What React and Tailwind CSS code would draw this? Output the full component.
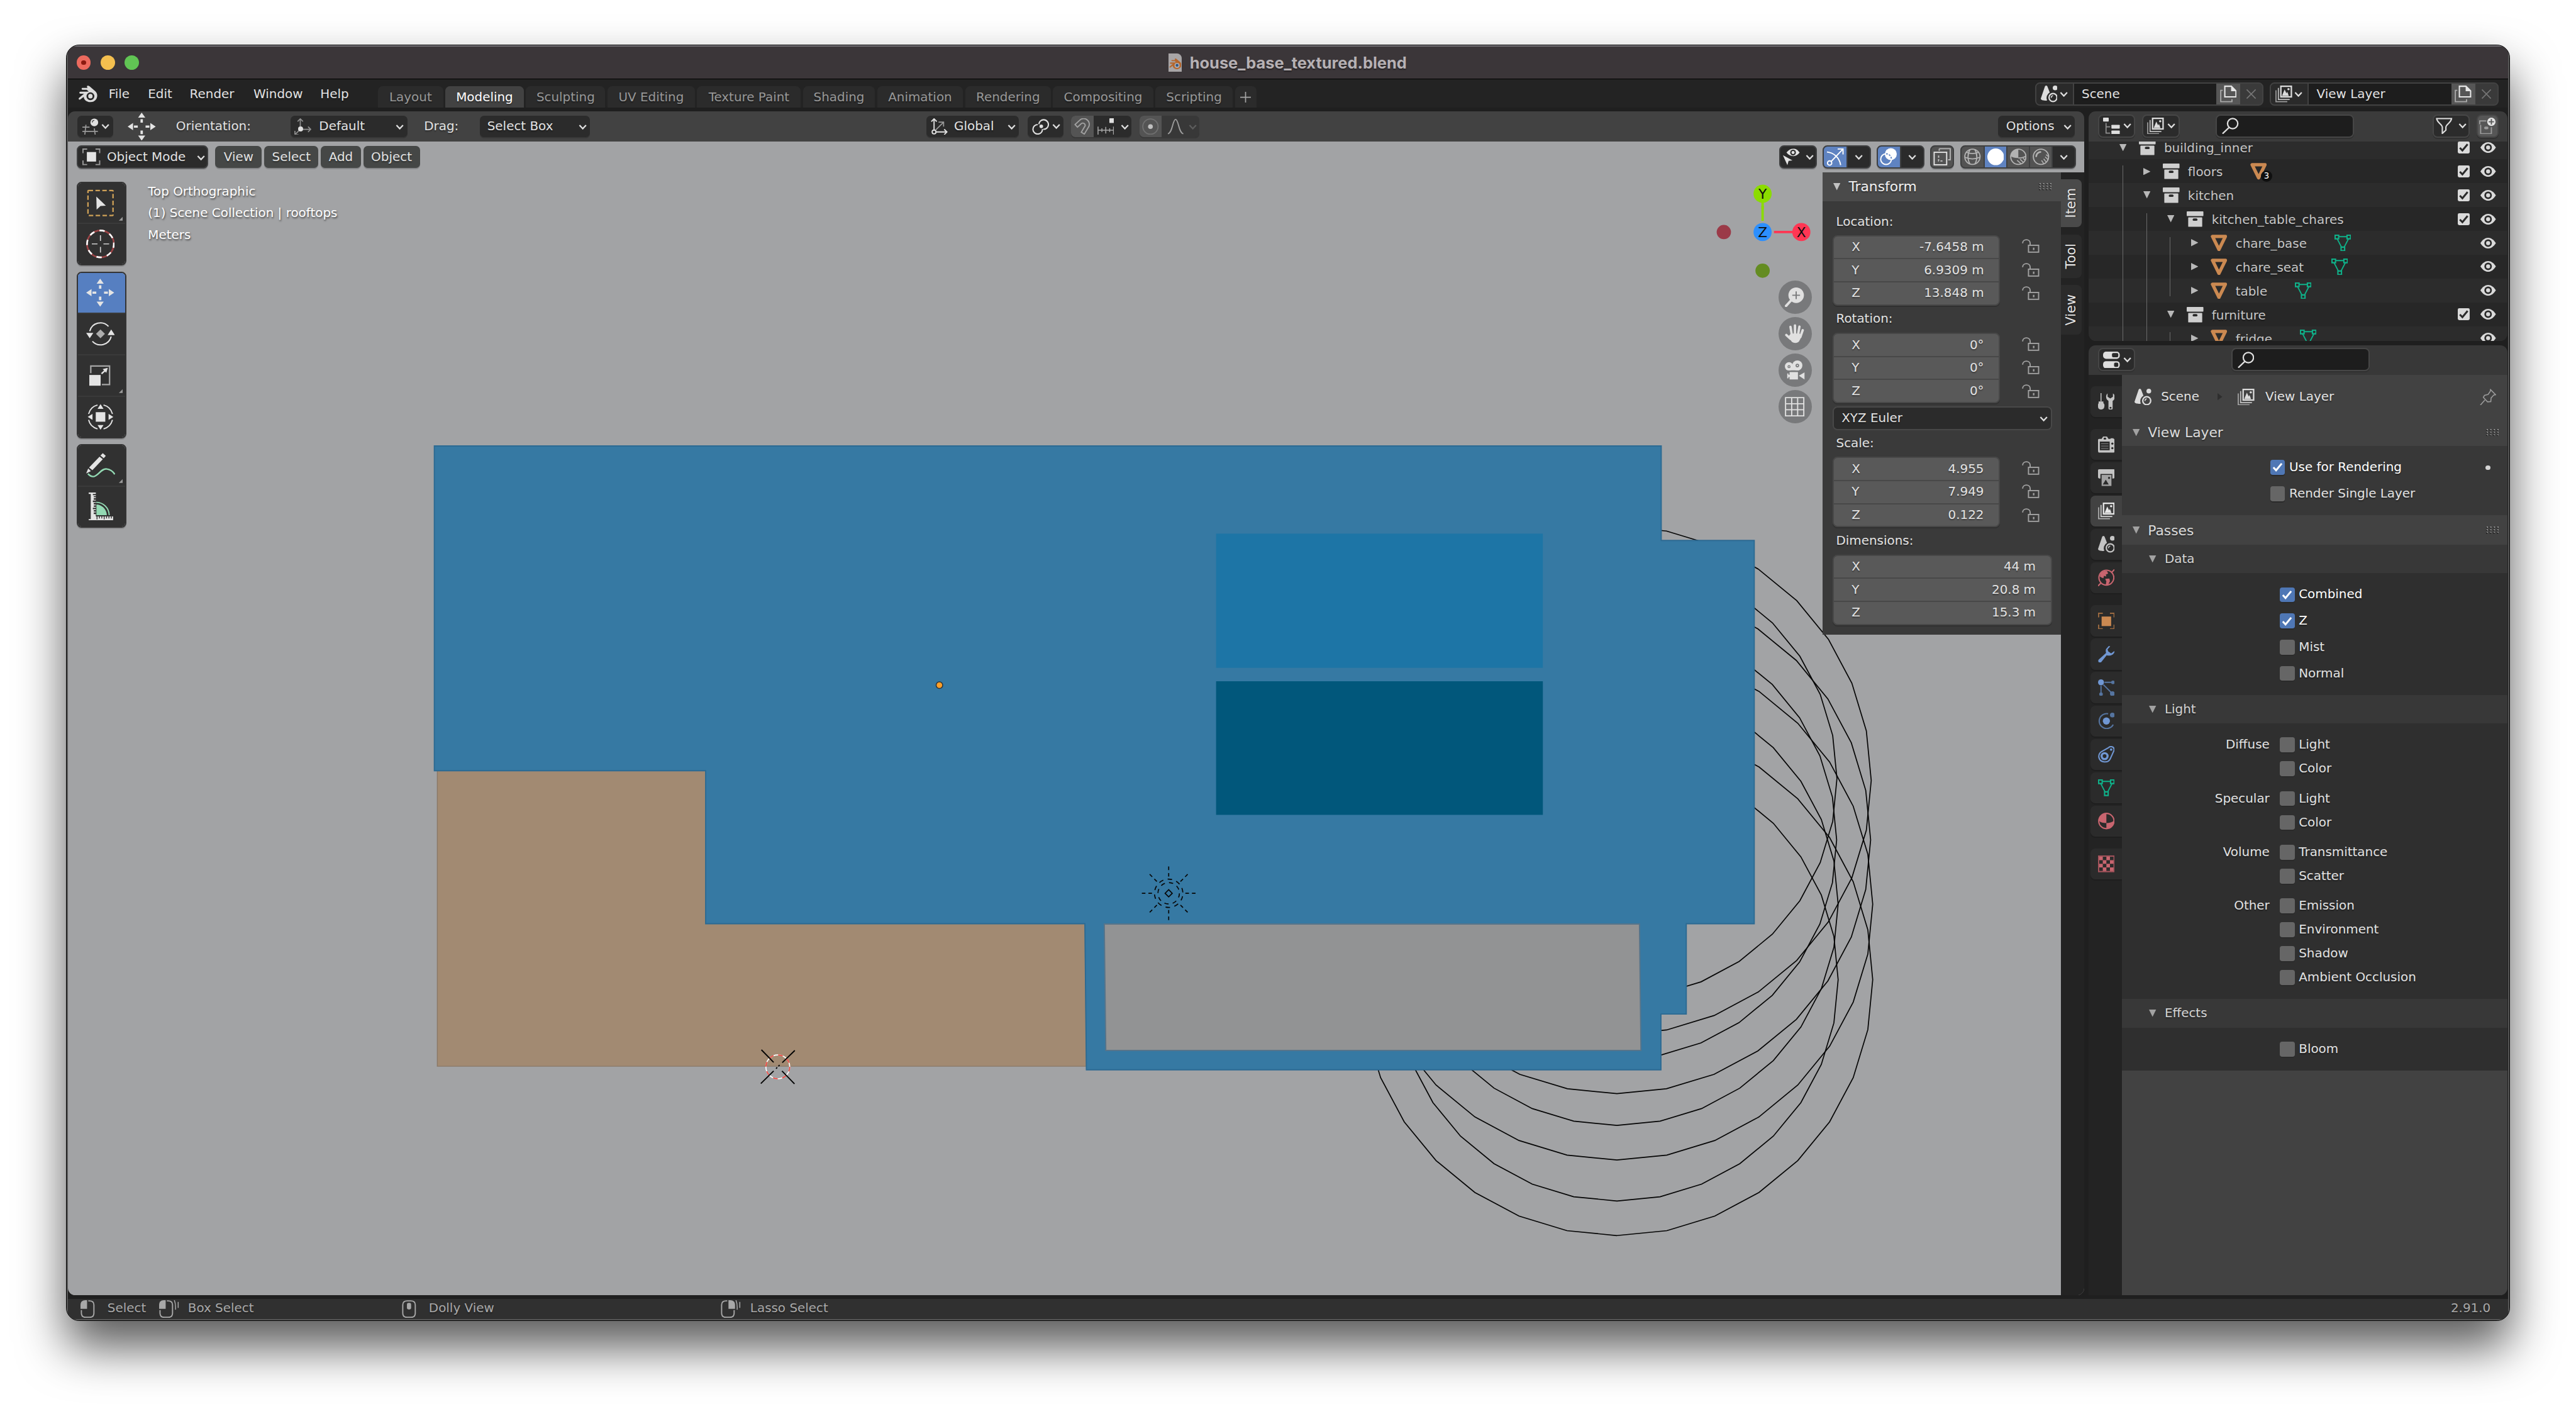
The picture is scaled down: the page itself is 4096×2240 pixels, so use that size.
import React from "react";

/* ---------- small drawing helpers ---------- */

const Svg = ({ w = 28, h = 28, className = "", children }) => (
  <svg width={w} height={h} viewBox={`0 0 ${w} ${h}`} className={`block shrink-0 ${className}`} fill="none">
    {children}
  </svg>
);

const Chevron = ({ c = "#dedede" }) => (
  <Svg w={14} h={10}>
    <path d="M1.500 2L7 8L12.500 2" stroke={c} strokeWidth="2.400" />
  </Svg>
);

const SceneIcon = ({ c = "#dcdcdc" }) => (
  <Svg>
    <path d="M9 0C10 0 10.800.8 11.200 1.800L15 11.500A10.500 10.500 0 0 0 10.500 25C6 26 0 24.800 0 22L6.800 1.800C7.200.8 8 0 9 0Z" fill={c} />
    <circle cx="24" cy="4" r="4" fill={c} />
    <circle cx="20.500" cy="20" r="6.700" stroke={c} strokeWidth="2.400" />
    <path d="M17.500 20.500A3.500 3.500 0 0 1 20.500 17" stroke={c} strokeWidth="1.600" />
  </Svg>
);

const ViewLayerIcon = ({ c = "#dcdcdc" }) => (
  <Svg>
    <path d="M1 8V27H20" stroke={c} strokeWidth="1.800" opacity=".65" />
    <path d="M5 4V23.300H24" stroke={c} strokeWidth="1.800" opacity=".85" />
    <rect x="9.200" y="1.200" width="17.600" height="17.800" stroke={c} strokeWidth="2.400" />
    <path d="M11 17.500L15.500 6.500L18.500 13L20 10.500L22.500 17.500Z" fill={c} />
    <circle cx="22" cy="6" r="1.900" fill={c} />
  </Svg>
);

const MeshDataIcon = () => (
  <Svg>
    <g stroke="#0fb189" strokeWidth="2">
      <path d="M7 3.500H21M4.500 7L12 21.500M23.500 7L16 21.500" />
      <path d="M1 1H7V7H1ZM21 1H27V7H21ZM11 21H17V27H11Z" strokeWidth="2.200" />
    </g>
  </Svg>
);

const MeshObjIcon = () => (
  <Svg>
    <path d="M3.200 3H24.800L14 25Z" stroke="#cb8951" strokeWidth="5.600" strokeLinejoin="round" />
  </Svg>
);

const CollectionIcon = () => (
  <Svg>
    <rect x="0" y="1" width="28" height="8" rx="1" fill="#cfcfcf" />
    <rect x="2.500" y="11" width="23.500" height="16" rx="1" fill="#cfcfcf" />
    <rect x="10" y="13" width="8" height="4" rx="2" fill="#2a2a2a" />
  </Svg>
);

const EyeIcon = () => (
  <Svg w={28} h={20}>
    <path d="M1 10C5 4 9 1 14 1S23 4 27 10C23 16 19 19 14 19S5 16 1 10Z" fill="#dadada" />
    <circle cx="14" cy="10" r="6.300" fill="#2a2a2a" />
    <circle cx="14" cy="10" r="3.400" fill="#dadada" />
  </Svg>
);

const CheckLight = () => (
  <Svg w={20} h={20}>
    <rect width="20" height="20" rx="2.500" fill="#dadada" />
    <path d="M3.500 10.500L7.800 15L16.500 4.500" stroke="#2a2a2a" strokeWidth="3.200" />
  </Svg>
);

const SearchIcon = () => (
  <Svg>
    <circle cx="18" cy="10" r="8.600" stroke="#dedede" strokeWidth="2.400" />
    <path d="M12 16.500L1 27" stroke="#dedede" strokeWidth="2.400" />
  </Svg>
);

const CopyIcon = () => (
  <Svg>
    <path d="M1.200 8H4.500M1.200 7V27H20V23" stroke="#a9a9a9" strokeWidth="2" />
    <path d="M8 1.200H19L26.800 9V19H8Z" stroke="#e6e6e6" strokeWidth="2.200" />
    <path d="M18.500 1V9.500H27Z" fill="#e6e6e6" />
  </Svg>
);

const CrossIcon = () => (
  <Svg w={18} h={18}>
    <path d="M1.500 1.500L16.500 16.500M16.500 1.500L1.500 16.500" stroke="#757575" strokeWidth="1.800" />
  </Svg>
);

const LockIcon = () => (
  <Svg w={29} h={24}>
    <path d="M1.200 7C1.200 3.500 4 1.200 7.500 1.200S13.800 3.500 13.800 7V10.500" stroke="#a2a2a2" strokeWidth="2" />
    <rect x="11" y="10.500" width="17" height="11.500" stroke="#a2a2a2" strokeWidth="2" />
    <rect x="18.500" y="14.500" width="2.400" height="4" fill="#a2a2a2" />
  </Svg>
);

const Grip = () => (
  <Svg w={22} h={12}>
    {[0, 6, 12, 18].map((x) => (
      <g key={x}>
        <path d={`M${x + 1} 1V3M${x + 1} 5.500V7.500M${x + 1} 10V12`} stroke="#151515" strokeWidth="2" />
        <path d={`M${x + 2} 0V2M${x + 2} 4.500V6.500M${x + 2} 9V10.500`} stroke="#969696" strokeWidth="2" />
      </g>
    ))}
  </Svg>
);

const TriDown = ({ c = "#b0b0b0" }) => (
  <Svg w={12} h={12}>
    <path d="M0 0H12L6 12Z" fill={c} />
  </Svg>
);
const TriRight = () => (
  <Svg w={12} h={12}>
    <path d="M0 0V12L12 6Z" fill="#b8b8b8" />
  </Svg>
);

const MoveIcon = () => (
  <Svg w={47} h={47}>
    <g fill="#e4e4e4">
      <path d="M23.500 0L29.500 8.500H17.500ZM23.500 47L17.500 38.500H29.500ZM0 23.500L9 17.500V29.500ZM47 23.500L38 17.500V29.500Z" />
      <path d="M21.500 11H25.500V17H21.500ZM21.500 30H25.500V36H21.500ZM10.500 21.700H17V25.300H10.500ZM30 21.700H36.500V25.300H30Z" />
    </g>
  </Svg>
);

const BlenderLogo = ({ w = 31, h = 28, c = "#dcdcdc", dot = "#dcdcdc", hole = "#232323" }) => (
  <svg width={w} height={h} viewBox="0 0 31 28" className="block shrink-0">
    <path
      d="M14.500.6C15.800-.4 17.500.6 18.500 1.400L28.500 10C34 15.500 31 27.500 20 27.800C13 28 8.800 23.300 8.500 19L3 23.200C1.200 24.500-1 22.700.6 20.800L9 13.800H3C.8 13.800.6 10.300 3 10.200H14L17 10L13.600 7H6.500C4.600 7 4.600 4 6.500 4H15C14 3 13.600 1.600 14.500.6Z"
      fill={c}
    />
    <circle cx="19.800" cy="18" r="6.600" fill={hole} />
    <circle cx="19.800" cy="17.800" r="3.700" fill={dot} />
  </svg>
);

/* ---------- generic widgets ---------- */

const Chip = ({ className = "", children }) => (
  <div className={`flex h-[36px] shrink-0 items-center rounded-[7px] bg-[#2b2b2b] shadow-[0_2px_0_#383838] ${className}`}>{children}</div>
);

const Field = ({ rows, wide }) => (
  <div className={`flex h-[118px] shrink-0 flex-col overflow-hidden rounded-[8px] border-[2.2px] border-[#484848] bg-[#595959] shadow-[0_2px_0_#303030] ${wide ? "w-[368px]" : "w-[281px]"}`}>
    {rows.map(([k, v], i) => (
      <div key={k} className={`flex flex-1 items-center justify-between pl-[30px] pr-[25px] ${i ? "border-t-[2.2px] border-[#484848]" : ""}`}>
        <span>{k}</span>
        <span>{v}</span>
      </div>
    ))}
  </div>
);

const LockedField = ({ rows }) => (
  <div className="flex h-[118px]">
    <Field rows={rows} />
    <div className="ml-[37px] flex flex-col pt-[7px]">
      {rows.map(([k]) => (
        <div key={k} className="h-[39.500px] shrink-0">
          <LockIcon />
        </div>
      ))}
    </div>
  </div>
);

const Check = ({ on }) =>
  on ? (
    <div className="flex size-[25px] shrink-0 items-center justify-center rounded-[4px] bg-[#4f77b5] shadow-[0_2px_0_#2a2a2a]">
      <Svg w={20} h={18}>
        <path d="M3 9.500L7.500 14.500L17 3" stroke="#fff" strokeWidth="3.200" />
      </Svg>
    </div>
  ) : (
    <div className="size-[25px] shrink-0 rounded-[4px] bg-[#666] shadow-[0_2px_0_#2a2a2a]" />
  );

/* ---------- top bars ---------- */

const TitleBar = () => (
  <div className="flex h-[54px] shrink-0 items-center bg-[#3b3639]">
    <div className="flex w-[1845px] gap-[16.500px] pl-[14px]">
      <div className="flex size-[24px] items-center justify-center rounded-full bg-[#ec6a5e]">
        <div className="size-[8px] rounded-full bg-[#8c1a10]" />
      </div>
      <div className="size-[24px] rounded-full bg-[#f4bf4f]" />
      <div className="size-[24px] rounded-full bg-[#61c554]" />
    </div>
    <div className="flex h-[30px] w-[23px] items-center justify-center rounded-tr-[8px] bg-[#a8a5a6] pt-[4px]">
      <BlenderLogo w={21} h={18} c="#b5652b" dot="#2c5687" hole="#b0adae" />
    </div>
    <div className="ml-[13px] whitespace-nowrap font-['Inter'] text-[26.800px] font-bold text-[#b6b1b4]">house_base_textured.blend</div>
  </div>
);

const tabs = [
  ["Layout", "w-[109px]"],
  ["Modeling", "w-[131px]"],
  ["Sculpting", "w-[133px]"],
  ["UV Editing", "w-[146px]"],
  ["Texture Paint", "w-[174px]"],
  ["Shading", "w-[120px]"],
  ["Animation", "w-[144px]"],
  ["Rendering", "w-[143px]"],
  ["Compositing", "w-[168px]"],
  ["Scripting", "w-[129px]"],
];

const IdBlock = ({ icon, name, nameW, className }) => (
  <div className={`flex h-[40px] overflow-hidden rounded-[8px] border-[2.2px] border-[#424242] bg-[#3a3a3a] ${className}`}>
    <div className="flex w-[61px] items-center gap-[4px] bg-[#2a2a2a] pl-[7px]">
      {icon}
      <Chevron />
    </div>
    <div className={`flex items-center border-l-[2.2px] border-[#424242] bg-[#1d1d1d] pl-[13px] ${nameW}`}>{name}</div>
    <div className="flex w-[40px] items-center justify-center bg-[#565656]">
      <CopyIcon />
    </div>
    <div className="flex flex-1 items-center justify-center">
      <CrossIcon />
    </div>
  </div>
);

const MenuBar = () => (
  <div className="flex h-[47px] shrink-0 items-center bg-[#232323] text-[#e2e2e2]">
    <div className="ml-[18px] pt-[2px]">
      <BlenderLogo />
    </div>
    <div className="ml-[19px] flex pt-[2px]">
      <span className="w-[66px]">File</span>
      <span className="w-[70px]">Edit</span>
      <span className="w-[107px]">Render</span>
      <span className="w-[112px]">Window</span>
      <span className="w-[97px]">Help</span>
    </div>
    <div className="flex gap-[4px] self-end">
      {tabs.map(([t, w]) => (
        <div
          key={t}
          className={`flex h-[36px] items-center justify-center rounded-t-[8px] pt-[3px] ${w} ${
            t === "Modeling" ? "bg-[#424242] text-white" : "bg-[#2b2b2b] text-[#989898]"
          }`}
        >
          {t}
        </div>
      ))}
      <div className="flex h-[36px] w-[36px] items-center justify-center rounded-t-[8px] bg-[#2b2b2b] pt-[2px]">
        <Svg w={18} h={18}>
          <path d="M9 0V18M0 9H18" stroke="#a5a5a5" strokeWidth="1.800" />
        </Svg>
      </div>
    </div>
    <div className="flex-1" />
    <IdBlock className="mt-[2px] w-[383px]" icon={<SceneIcon />} name="Scene" nameW="w-[241px]" />
    <IdBlock className="ml-[11px] mr-[16px] mt-[2px] w-[383px]" icon={<ViewLayerIcon />} name="View Layer" nameW="w-[241px]" />
  </div>
);

const ToolHeader = () => (
  <div className="flex h-[50px] shrink-0 items-center bg-[#424242] text-[#e2e2e2]">
    <Chip className="ml-[16px] w-[60px] gap-[4px] pl-[8px]">
      <Svg>
        <g stroke="#9a9a9a" strokeWidth="1.800">
          <path d="M6 11L4 28M20 17L21.500 28M0 15H12M0 22H26" />
        </g>
        <circle cx="20" cy="7" r="6.500" fill="#e0e0e0" />
        <path d="M16.500 7A3.500 3.500 0 0 1 20 3.500" stroke="#444" strokeWidth="1.400" />
      </Svg>
      <Chevron />
    </Chip>
    <div className="ml-[24px]">
      <MoveIcon />
    </div>
    <span className="ml-[34px] w-[192px]">Orientation:</span>
    <Chip className="w-[196px] pl-[7px]">
      <Svg>
        <g stroke="#8f8f8f" strokeWidth="1.800">
          <path d="M10 14V1M5.500 5.500L10 1L14.500 5.500M14 18.500H27.500M23 14L27.500 18.500L23 23M7.500 21L1 27.500M1 21V27.500H7" />
        </g>
        <circle cx="10.500" cy="18" r="4.200" fill="#e0e0e0" />
      </Svg>
      <span className="ml-[13px] flex-1">Default</span>
      <div className="mr-[6px] pt-[2px]">
        <Chevron />
      </div>
    </Chip>
    <span className="ml-[28px] w-[94px]">Drag:</span>
    <Chip className="w-[184px] pl-[12px]">
      <span className="flex-1">Select Box</span>
      <div className="mr-[5px] pt-[2px]">
        <Chevron />
      </div>
    </Chip>
    <Chip className="ml-[564px] w-[156px] pl-[8px]">
      <Svg>
        <g stroke="#e0e0e0" strokeWidth="2">
          <path d="M5.500 20V1M1 5.500L5.500 1L10 5.500M9 23H27M22.500 18.500L27 23L22.500 27.500" />
          <circle cx="5.500" cy="23" r="3.200" />
        </g>
        <path d="M8 20L21 7M13 6.500H21.500V14" stroke="#999" strokeWidth="1.800" />
      </Svg>
      <span className="ml-[11px] flex-1">Global</span>
      <div className="mr-[5px] pt-[2px]">
        <Chevron />
      </div>
    </Chip>
    <Chip className="ml-[14px] w-[60px] gap-[5px] pl-[8px]">
      <Svg>
        <g stroke="#e0e0e0" strokeWidth="2.200">
          <path d="M11.500 10A8 8 0 1 1 19 18.500" />
          <path d="M9.500 10.500A8 8 0 1 0 17.500 18" />
        </g>
        <circle cx="15.500" cy="13.500" r="3" fill="#e0e0e0" />
      </Svg>
      <Chevron />
    </Chip>
    <Chip className="ml-[13px] w-[101px] overflow-hidden">
      <div className="flex h-full w-[38px] items-center justify-center bg-[#545454]">
        <Svg>
          <path d="M1.500 10.500L9 3.500A9.500 9.500 0 0 1 24.500 14L17 26.500L12 23.500L18.500 12.500A4 4 0 0 0 12 9L5.500 15Z" stroke="#a0a0a0" strokeWidth="2" />
        </Svg>
      </div>
      <div className="ml-[6px]">
        <Svg>
          <path d="M1 14V28M27 14V28M1 20H27M7.500 17V23M14 14.500V25.500M20.500 17V23" stroke="#a8a8a8" strokeWidth="1.600" />
          <rect x="20" y="0" width="8" height="8" rx="1" fill="#e0e0e0" />
        </Svg>
      </div>
      <div className="ml-[11px] pt-[2px]">
        <Chevron />
      </div>
    </Chip>
    <Chip className="ml-[14px] w-[100px] overflow-hidden !bg-[#383838]">
      <div className="flex h-full w-[37px] items-center justify-center bg-[#545454]">
        <Svg>
          <circle cx="14" cy="14" r="12.800" stroke="#707070" strokeWidth="2" />
          <circle cx="14" cy="14" r="4" fill="#c0c0c0" />
        </Svg>
      </div>
      <div className="ml-[9px]">
        <Svg>
          <path d="M1 26C9 25 9 2 14 2S19 25 27 26" stroke="#9c9c9c" strokeWidth="2" />
        </Svg>
      </div>
      <div className="ml-[8px] pt-[2px]">
        <Chevron c="#5c5c5c" />
      </div>
    </Chip>
    <div className="flex-1" />
    <Chip className="mr-[16px] w-[128px] pl-[13px]">
      <span className="flex-1">Options</span>
      <div className="mr-[5px] pt-[2px]">
        <Chevron />
      </div>
    </Chip>
  </div>
);

/* ---------- 3D viewport ---------- */

const polygon = (cx, cy, r) =>
  Array.from({ length: 32 }, (_, i) => {
    const a = (i * Math.PI) / 16;
    return `${(cx + r * Math.sin(a)).toFixed(1)},${(cy + r * Math.cos(a)).toFixed(1)}`;
  }).join(" ");

const lights = [
  [1308.4, 426.5],
  [1408, 425.5],
  [1515.7, 429],
  [1642.4, 429],
  [1305, 369],
  [1408, 368.5],
  [1515.7, 371],
  [1642.4, 371],
];

const Canvas = () => (
  <svg className="absolute inset-0" width="3381" height="1935" viewBox="114 237 3381 1935" fill="none">
    {lights.map(([cy, r], i) => (
      <polygon key={i} points={polygon(2711.7, cy, r)} stroke="#050505" strokeWidth="1.800" />
    ))}
    <path d="M733.500 1291H1185V1548H1819.500L1822 1787.500H733.500Z" fill="#a28a72" stroke="#8a7867" strokeWidth="1.500" />
    <path
      d="M728.500 747.500H2786V906H2942V1548.500H2828V1700H2785.500V1793.500H1822L1819.500 1548.500H1183.500V1292H728.500Z"
      fill="#3679a3"
      stroke="#2c6a92"
      strokeWidth="2"
    />
    <path d="M1852 1549H2749.500L2752 1761H1854.500Z" fill="#929394" stroke="#57748a" strokeWidth="2" />
    <rect x="2039.500" y="894.500" width="548" height="225" fill="#1d75a6" />
    <rect x="2039.500" y="1142" width="548" height="224" fill="#01577b" />
    <circle cx="1575.500" cy="1148.500" r="5.500" fill="#ff9f28" stroke="#2f3436" strokeWidth="1.600" />
    <g stroke="#070707" strokeWidth="1.800" transform="translate(1960 1497.500)">
      <path d="M0-6L6 0L0 6L-6 0Z" />
      <circle r="18" strokeDasharray="7.100 7.037" />
      <circle r="23.800" strokeDasharray="7.500 7.454" transform="rotate(12)" />
      {[0, 45, 90, 135, 180, 225, 270, 315].map((a) => (
        <path key={a} d="M28 0H34M39 0H45" transform={`rotate(${a})`} />
      ))}
    </g>
    <g transform="translate(1304.500 1788.500)">
      <circle r="20" stroke="#fff" strokeWidth="1.800" />
      <circle r="20" stroke="#f0443e" strokeWidth="1.800" strokeDasharray="7.854 7.854" />
      <path d="M-27.500-28.500L-7-7.500M28.500-27.500L7.500-7M-28.500 28L-7 7M28 28.500L7 7M-3 3L-1 1M1-1L3-3" stroke="#000" strokeWidth="2" />
    </g>
    <g strokeWidth="4">
      <path d="M2956 345V370" stroke="#8bdc00" />
      <path d="M2975 388.800H3010" stroke="#ff3653" />
    </g>
    <circle cx="2956" cy="324.500" r="15.200" fill="#8bdc00" />
    <path d="M2956 335V350" stroke="#8bdc00" strokeWidth="4" />
    <circle cx="2956" cy="388.800" r="15.200" fill="#2c8fff" />
    <circle cx="3021" cy="388.800" r="15.200" fill="#ff3653" />
    <circle cx="2891" cy="388.800" r="12" fill="#9b3a48" />
    <circle cx="2956" cy="453.500" r="12" fill="#648c22" />
    <g fill="#0d0d0d" textAnchor="middle" className="font-['DejaVu_Sans'] text-[23px] [text-shadow:none]">
      <text x="2956" y="333">Y</text>
      <text x="2956" y="397.200">Z</text>
      <text x="3021" y="397.200">X</text>
    </g>
  </svg>
);

const NavButtons = () => (
  <div className="absolute left-[2868px] top-[233.500px] flex flex-col gap-[5px]">
    <div className="flex size-[56px] items-center justify-center rounded-full bg-[#78797b]">
      <Svg w={33} h={33}>
        <circle cx="19" cy="13" r="13" fill="#e0e0e0" />
        <path d="M11 21L2 31" stroke="#e0e0e0" strokeWidth="4" strokeLinecap="round" />
        <path d="M19 6.500V19.500M12.500 13H25.500" stroke="#78797b" strokeWidth="2" />
      </Svg>
    </div>
    <div className="flex size-[56px] items-center justify-center rounded-full bg-[#78797b]">
      <Svg w={33} h={33}>
        <g stroke="#e0e0e0" strokeWidth="4" strokeLinecap="round">
          <path d="M12 20L9.500 5M17 18V2.500M22 19L24.500 4.500M26 22L30 10.500M9.500 25L2.500 18.500" />
        </g>
        <path d="M10 16H24.500L27.500 18C27 23 26.500 25 24.500 28C22.500 33 14 33 11 29L6 21Z" fill="#e0e0e0" />
      </Svg>
    </div>
    <div className="flex size-[56px] items-center justify-center rounded-full bg-[#78797b]">
      <Svg w={33} h={33}>
        <g fill="#e0e0e0">
          <circle cx="7" cy="10" r="7" />
          <circle cx="21" cy="8.500" r="8.500" />
          <path d="M7 10H24V16.500H7ZM8 19.500H22V32H8V28H6V30H4V22H6V24H8ZM23.500 25.500L33 20V32Z" />
        </g>
        <circle cx="7" cy="10.500" r="2.500" fill="#78797b" />
        <circle cx="7" cy="10.500" r="1" fill="#e0e0e0" />
        <circle cx="21" cy="8.500" r="3" fill="#78797b" />
        <circle cx="21" cy="8.500" r="1.200" fill="#e0e0e0" />
      </Svg>
    </div>
    <div className="flex size-[56px] items-center justify-center rounded-full bg-[#78797b]">
      <Svg w={33} h={33}>
        <path d="M1.200 1.200H31.800V31.800H1.200ZM11.500 1V32M21.500 1V32M1 11.500H32M1 21.500H32" stroke="#e0e0e0" strokeWidth="2" />
      </Svg>
    </div>
  </div>
);

const ViewBtn = ({ w, children }) => (
  <div className={`mr-[4px] flex h-[36px] items-center justify-center rounded-[7px] bg-[#454746] shadow-[0_2px_0_#87888a] ${w}`}>{children}</div>
);

const Group = ({ className, children }) => (
  <div className={`flex h-[40px] overflow-hidden rounded-[8px] border-[2.2px] border-[#3e3f40] bg-[#2b2b2b] shadow-[0_2px_0_#8b8c8e] ${className}`}>{children}</div>
);
const Cell = ({ className, children }) => <div className={`flex h-full shrink-0 items-center justify-center ${className}`}>{children}</div>;

const ViewportHeader = () => (
  <div className="relative flex h-[52px] shrink-0 items-center text-[#e2e2e2]">
    <Group className="ml-[15px] w-[220px] items-center pl-[7px]">
      <Svg w={30}>
        <path d="M1 8V1H8M22 1H29V8M29 20V27H22M8 27H1V20" stroke="#9a9a9a" strokeWidth="2" />
        <rect x="7.500" y="6" width="15.500" height="16" fill="#e4e4e4" />
      </Svg>
      <span className="ml-[11px] flex-1 whitespace-nowrap">Object Mode</span>
      <div className="mr-[3px] pt-[3px]">
        <Chevron />
      </div>
    </Group>
    <div className="ml-[12px] flex">
      <ViewBtn w="w-[78px]">View</ViewBtn>
      <ViewBtn w="w-[91px]">Select</ViewBtn>
      <ViewBtn w="w-[67px]">Add</ViewBtn>
      <ViewBtn w="w-[95px]">Object</ViewBtn>
    </div>
    <div className="flex-1" />
    <Group className="w-[64px] items-center gap-[9px] pl-[4px]">
      <Svg w={30} h={30}>
        <path d="M7 8C10 3.500 14 1.500 18.500 1.500S26 3.500 29 8C26 12 22.500 14 18.500 14S10 12 7 8Z" fill="#e4e4e4" />
        <circle cx="18" cy="8" r="4.800" fill="#2b2b2b" />
        <circle cx="18" cy="8" r="2.600" fill="#e4e4e4" />
        <path d="M1 12.500L17 21L10.500 22L8.500 29Z" fill="#e4e4e4" />
      </Svg>
      <Chevron />
    </Group>
    <Group className="ml-[9px] w-[81px]">
      <Cell className="w-[38px] bg-[#5f83c1]">
        <Svg w={30} h={30}>
          <path d="M1 7C12 8 22 16 24 29M8 23L27 3M19 2H28V11" stroke="#fff" strokeWidth="2" />
          <circle cx="5.500" cy="25.500" r="3.600" stroke="#fff" strokeWidth="2" fill="#5f83c1" />
        </Svg>
      </Cell>
      <Cell className="w-[39px] border-l-[2.2px] border-[#3e3f40]">
        <Chevron />
      </Cell>
    </Group>
    <Group className="ml-[10px] w-[80px]">
      <Cell className="w-[37px] bg-[#5f83c1]">
        <Svg w={30} h={30}>
          <circle cx="18.500" cy="10.500" r="10" fill="#fff" />
          <circle cx="10.500" cy="19" r="9" stroke="#fff" strokeWidth="2" />
          <path d="M10.500 10A9 9 0 0 1 19.500 19" stroke="#5f83c1" strokeWidth="2" strokeDasharray="3 2" />
        </Svg>
      </Cell>
      <Cell className="w-[39px] border-l-[2.2px] border-[#3e3f40]">
        <Chevron />
      </Cell>
    </Group>
    <Group className="ml-[10px] w-[40px]">
      <Cell className="w-[36px] bg-[#535353]">
        <Svg w={30} h={30}>
          <path d="M10 1.500H28.500V20H25M10 5V1.500" stroke="#b5b5b5" strokeWidth="2" />
          <rect x="1.500" y="7.500" width="21" height="21" stroke="#e4e4e4" strokeWidth="2" />
          <path d="M9 13V22H17" stroke="#c5c5c5" strokeWidth="2" strokeDasharray="3.500 2.500" />
        </Svg>
      </Cell>
    </Group>
    <Group className="ml-[10px] mr-[14px] w-[194px]">
      <Cell className="w-[37px] bg-[#535353]">
        <Svg>
          <g stroke="#b2b2b2" strokeWidth="2">
            <circle cx="14" cy="14" r="12.800" />
            <path d="M10 1.500C5.500 9 5.500 19 10 26.500M18 1.500C22.500 9 22.500 19 18 26.500M1.500 15C9 18 19 18 26.500 15M4 6.500C10 9 18 9 24 6.500" />
          </g>
        </Svg>
      </Cell>
      <Cell className="w-[38px] border-l-[2.2px] border-[#3e3f40] bg-[#5f83c1]">
        <Svg>
          <circle cx="14" cy="14" r="14" fill="#fff" />
        </Svg>
      </Cell>
      <Cell className="w-[38.500px] border-l-[2.2px] border-[#3e3f40] bg-[#535353]">
        <Svg>
          <circle cx="14" cy="14" r="12.800" stroke="#b2b2b2" strokeWidth="2" />
          <path d="M14 1V16C8 16 4 15 1 13C1.500 6 7 1 14 1Z" fill="#b2b2b2" />
          <path d="M14 16C19 16 24 15 27 12.500M12 20L19 26M17 18L23 24M22 16.500L26 20" stroke="#b2b2b2" strokeWidth="1.800" />
        </Svg>
      </Cell>
      <Cell className="w-[38px] border-l-[2.2px] border-[#3e3f40] bg-[#535353]">
        <Svg>
          <circle cx="14" cy="14" r="12.800" stroke="#b2b2b2" strokeWidth="2" />
          <path d="M6 13A8 8 0 0 1 13 6" stroke="#b2b2b2" strokeWidth="3" strokeLinecap="round" />
          <path d="M15 20L19 26M18.500 17.500L23 23M21 14L26 19M22.500 10.500L27 14" stroke="#b2b2b2" strokeWidth="1.600" />
        </Svg>
      </Cell>
      <Cell className="flex-1 border-l-[2.2px] border-[#3e3f40]">
        <Chevron />
      </Cell>
    </Group>
  </div>
);

const Corner = () => (
  <svg width="7" height="7" viewBox="0 0 7 7" className="absolute bottom-[4px] right-[4px]">
    <path d="M7 0V7H0Z" fill="#9a9a9a" />
  </svg>
);

const ToolCell = ({ active, first, corner, children }) => (
  <div className={`relative flex flex-1 items-center justify-center pr-[4px] ${active ? "bg-[#567fc1]" : "bg-[#313131]"} ${first ? "" : "border-t-[2.2px] border-[#3a3a3a]"}`}>
    {children}
    {corner && <Corner />}
  </div>
);
const toolGroup = "flex w-[84px] flex-col overflow-hidden rounded-[8px] border-[2.2px] border-[#343434] shadow-[0_2px_0_#8b8c8e]";

const Toolbar = () => (
  <div className="flex flex-col gap-[10.500px]">
    <div className={`${toolGroup} h-[139.500px]`}>
      <ToolCell first corner>
        <Svg w={46} h={46}>
          <rect x="2" y="2" width="42" height="42" stroke="#d0a257" strokeWidth="2.400" strokeDasharray="7.500 4" rx="1" />
          <path d="M16 12L32 27.500L23 28L16.500 34Z" fill="#e4e4e4" />
        </Svg>
      </ToolCell>
      <ToolCell>
        <Svg w={48} h={48}>
          <circle cx="24" cy="24" r="22.500" stroke="#9c4446" strokeWidth="2.800" />
          <circle cx="24" cy="24" r="22.500" stroke="#fff" strokeWidth="2.800" strokeDasharray="8.836 8.836" transform="rotate(-6 24 24)" />
          <path d="M24 9.500V19M24 29V38.500M9.500 24H19M29 24H38.500" stroke="#cfcfcf" strokeWidth="1.800" />
        </Svg>
      </ToolCell>
    </div>
    <div className={`${toolGroup} h-[279.500px]`}>
      <ToolCell first active>
        <MoveIcon />
      </ToolCell>
      <ToolCell>
        <Svg w={48} h={48}>
          <path d="M6 19.500A18.500 18.500 0 0 1 37.500 11.500M42 28.500A18.500 18.500 0 0 1 10.500 36.500" stroke="#e4e4e4" strokeWidth="2.200" />
          <path d="M0 22.500H12L6 31.500ZM36 26H48L42 16.500Z" fill="#e4e4e4" />
          <path d="M24 16.500L31.500 24L24 31.500L16.500 24Z" fill="#adadad" />
        </Svg>
      </ToolCell>
      <ToolCell corner>
        <Svg w={36} h={36}>
          <path d="M2.500 14V2H34V33H21" stroke="#a5a5a5" strokeWidth="2.400" />
          <rect x="0" y="17" width="19" height="18" fill="#e4e4e4" />
          <path d="M20.500 15L27 9" stroke="#e4e4e4" strokeWidth="2.600" />
          <path d="M31 5L28.500 13.500L22.500 7Z" fill="#e4e4e4" />
        </Svg>
      </ToolCell>
      <ToolCell>
        <Svg w={44} h={44}>
          <path d="M2 17A20.500 20.500 0 0 1 17 2M27 2A20.500 20.500 0 0 1 42 17M42 27A20.500 20.500 0 0 1 27 42M17 42A20.500 20.500 0 0 1 2 27" stroke="#e4e4e4" strokeWidth="2" />
          <path d="M22 0.500L27 8.500H17ZM22 43.500L17 35.500H27ZM.5 22L8.500 17V27ZM43.500 22L35.500 17V27Z" fill="#e4e4e4" />
          <rect x="14" y="14" width="16" height="16" fill="#e4e4e4" />
        </Svg>
      </ToolCell>
    </div>
    <div className={`${toolGroup} h-[139.500px]`}>
      <ToolCell first corner>
        <Svg w={50} h={42}>
          <path d="M4 35C18 50 24 24 36 27C42 28 46 31 49 36" stroke="#93d9b3" strokeWidth="2.600" />
          <path d="M29 .5L34 5L30.500 9L25 4.500ZM23.500 6.200L29 10.500L11.500 29L6 24.500ZM4.500 26.200L9 30.500L1 34.500Z" fill="#e4e4e4" />
        </Svg>
      </ToolCell>
      <ToolCell>
        <Svg w={42} h={47} className="mr-[-4px]">
          <path d="M0 0H12V2.500H7V4.500H12V6H8.500V8H12V9.500H8.500V12H12V13.500H7V16H12V17.500H8.500V20H12V21.500H8.500V24H12V25.500H7V28H12V29.500H8.500V32H12V33.500H8.500V36H12V40H41V47H0V44.500H3.500V2.500H0Z" fill="#e4e4e4" />
          <path d="M14 40V45M18 40V43.500M22 40V43.500M26 40V45M30 40V43.500M34 40V43.500M38 40V43.500" stroke="#313131" strokeWidth="1.500" />
          <path d="M13 38V20C21 20 30 27 30.500 38Z" fill="#93d9b3" />
          <path d="M12.500 16.500C24 16.500 34 25 34.500 38" stroke="#93d9b3" strokeWidth="2" />
        </Svg>
      </ToolCell>
    </div>
  </div>
);

const NPanel = () => (
  <div className="h-[775px] w-[400px] shrink-0 bg-[#3a3a3a] text-[#e2e2e2]">
    <div className="flex h-[48px] items-center bg-[#4a4a4a] pl-[18px] pr-[15px] text-[23px] text-[#f2f2f2]">
      <TriDown c="#c2c2c2" />
      <span className="ml-[14px] flex-1 pt-[2px]">Transform</span>
      <Grip />
    </div>
    <div className="flex flex-col pl-[17px]">
      <div className="mt-[13px] flex h-[44px] items-center pl-[6px]">Location:</div>
      <LockedField rows={[["X", "-7.6458 m"], ["Y", "6.9309 m"], ["Z", "13.848 m"]]} />
      <div className="flex h-[46px] items-center pl-[6px]">Rotation:</div>
      <LockedField rows={[["X", "0°"], ["Y", "0°"], ["Z", "0°"]]} />
      <div className="mt-[5px] flex h-[40px] w-[368px] items-center rounded-[8px] border-[2.2px] border-[#484848] bg-[#2b2b2b] pl-[13px] pr-[5px]">
        <span className="flex-1">XYZ Euler</span>
        <div className="pt-[3px]">
          <Chevron />
        </div>
      </div>
      <div className="flex h-[45px] items-center pl-[6px]">Scale:</div>
      <LockedField rows={[["X", "4.955"], ["Y", "7.949"], ["Z", "0.122"]]} />
      <div className="flex h-[46px] items-center pl-[6px]">Dimensions:</div>
      <Field wide rows={[["X", "44 m"], ["Y", "20.8 m"], ["Z", "15.3 m"]]} />
    </div>
  </div>
);

const SideTabs = () => (
  <div className="flex h-full w-[39px] shrink-0 flex-col items-start bg-[#232323] pt-[11px] text-[22px] text-[#e6e6e6]">
    {[
      ["Item", "h-[81px] bg-[#4a4a4a]"],
      ["Tool", "mt-[12px] h-[73px] bg-[#2b2b2b]"],
      ["View", "mt-[12px] h-[83px] bg-[#2b2b2b]"],
    ].map(([t, c]) => (
      <div key={t} className={`flex w-[35px] items-center justify-center rounded-r-[8px] ${c}`}>
        <span className="rotate-180 [writing-mode:vertical-rl]">{t}</span>
      </div>
    ))}
  </div>
);

const Viewport = () => (
  <div className="relative flex h-[1935px] flex-col bg-[#a2a3a5]">
    <Canvas />
    <NavButtons />
    <ViewportHeader />
    <div className="relative flex min-h-0 flex-1">
      <div className="pl-[14px] pt-[16px]">
        <Toolbar />
      </div>
      <div className="ml-[36px] flex-1 pt-[15px] leading-[36px] text-white [text-shadow:1px_2px_3px_rgba(0,0,0,.6)]">
        <div>Top Orthographic</div>
        <div>(1) Scene Collection | rooftops</div>
        <div>Meters</div>
      </div>
      <NPanel />
      <SideTabs />
    </div>
  </div>
);

/* ---------- outliner ---------- */

const HeaderBtn = ({ className, children }) => (
  <div className={`flex h-[39px] items-center rounded-[8px] border-[2.2px] border-[#464646] bg-[#2b2b2b] shadow-[0_2px_0_#303030] ${className}`}>{children}</div>
);

const treeRows = [
  { n: "building_inner", lv: 0, open: true, col: true },
  { n: "floors", lv: 1, col: true, badge: "3" },
  { n: "kitchen", lv: 1, open: true, col: true },
  { n: "kitchen_table_chares", lv: 2, open: true, col: true },
  { n: "chare_base", lv: 3 },
  { n: "chare_seat", lv: 3 },
  { n: "table", lv: 3 },
  { n: "furniture", lv: 2, open: true, col: true },
  { n: "fridge", lv: 3 },
];

const Outliner = () => (
  <div className="flex h-[385px] shrink-0 flex-col overflow-hidden rounded-[12px] bg-[#282828]">
    <div className="flex h-[50px] shrink-0 items-center bg-[#3b3b3b] pb-[2px]">
      <HeaderBtn className="ml-[16px] w-[63px] gap-[5px] pl-[7px]">
        <Svg>
          <rect x="0" y="0" width="9.500" height="6.500" rx="1" fill="#dedede" />
          <path d="M5 9V26H12M5 15.500H12" stroke="#8f8f8f" strokeWidth="1.800" />
          <rect x="14" y="12" width="14" height="6.500" rx="1" fill="#dedede" />
          <rect x="14" y="21.500" width="14" height="6.500" rx="1" fill="#dedede" />
        </Svg>
        <Chevron />
      </HeaderBtn>
      <HeaderBtn className="ml-[11px] w-[63px] gap-[5px] pl-[7px]">
        <ViewLayerIcon />
        <Chevron />
      </HeaderBtn>
      <HeaderBtn className="ml-[61px] w-[232px] !bg-[#1d1d1d] pl-[8px]">
        <SearchIcon />
      </HeaderBtn>
      <div className="flex-1" />
      <HeaderBtn className="w-[63px] gap-[9px] pl-[4px]">
        <Svg>
          <path d="M1.500 1.500H26.500C26 8 17 12 17 16V21L11 26.500V16C11 12 2 8 1.500 1.500Z" stroke="#dedede" strokeWidth="2.200" />
        </Svg>
        <Chevron />
      </HeaderBtn>
      <HeaderBtn className="ml-[11px] mr-[15px] w-[37px] justify-center !bg-[#565656]">
        <Svg>
          <path d="M1 11V5.500H12M2.500 12V27H20.500V16" stroke="#9c9c9c" strokeWidth="2" />
          <rect x="8.500" y="15" width="7" height="4.500" rx="2" fill="#9c9c9c" />
          <circle cx="20.500" cy="7" r="7" fill="#e4e4e4" />
          <path d="M20.500 2.500V11.500M16 7H25" stroke="#565656" strokeWidth="2" />
        </Svg>
      </HeaderBtn>
    </div>
    <div className="relative flex-1 overflow-hidden text-[#c6c6c6]">
      <div className="mt-[-10px]">
        {treeRows.map((r, i) => (
          <div key={r.n} className={`flex h-[40px] items-center pr-[19px] ${i % 2 ? "bg-[#272727]" : "bg-[#2c2c2c]"}`}>
            <div className="h-px shrink-0" style={{ width: 52 + 40 * r.lv }} />
            {r.open ? <TriDown c="#b8b8b8" /> : <TriRight />}
            <div className="relative ml-[21px]">{r.col ? <CollectionIcon /> : <MeshObjIcon />}</div>
            <span className="ml-[14px] pt-[4px]">{r.n}</span>
            <div className="relative ml-[46px]">
              {r.lv === 3 && <MeshDataIcon />}
              {r.badge && (
                <>
                  <MeshObjIcon />
                  <div className="absolute left-[18px] top-[13px] flex size-[19px] items-center justify-center rounded-full bg-[#101010] text-[14px] text-white">{r.badge}</div>
                </>
              )}
            </div>
            <div className="flex-1" />
            {r.col && <CheckLight />}
            <div className="ml-[16px]">
              <EyeIcon />
            </div>
          </div>
        ))}
      </div>
      <div className="absolute left-[57px] top-[40px] h-[300px] w-px bg-[#6a6a6a]" />
      <div className="absolute left-[97px] top-[120px] h-[220px] w-px bg-[#6a6a6a]" />
      <div className="absolute left-[137px] top-[160px] h-[100px] w-px bg-[#6a6a6a]" />
      <div className="absolute left-[137px] top-[320px] h-[20px] w-px bg-[#6a6a6a]" />
    </div>
  </div>
);

/* ---------- properties editor ---------- */

const B = "#7097d3";
const B2 = "#55749f";
const R = "#c8656f";

const propIcons = {
  tool: (
    <Svg>
      <path d="M5 0V14" stroke="#c4c4c4" strokeWidth="1.600" />
      <path d="M1 14H9V16.500C11 18.500 11 20 10.500 23C10 29 0 29 0 23C-.5 20 0 18.500 1 16.500Z" fill="#c4c4c4" />
      <path d="M16 .5V6L20.500 9L25 6V.5C29.500 3 29 10.500 24.500 13V25.500C24.500 29 17.500 29 17.500 25.500V13C12.500 10.500 12.500 3 16 .5Z" fill="#c4c4c4" />
      <circle cx="21" cy="24.500" r="1.600" fill="#2b2b2b" />
    </Svg>
  ),
  render: (
    <Svg>
      <path d="M6 5L8.500 1H15L17.500 5H21V4H26V5C27.500 5 28 6 28 7V25C28 27 27 28 25.500 28H2.500C1 28 0 27 0 25V7C0 6 .5 5 2 5Z" fill="#c4c4c4" />
      <rect x="9.500" y="3" width="4" height="3" fill="#2b2b2b" />
      <rect x="3" y="9.500" width="16.500" height="14.500" fill="#2b2b2b" />
      <path d="M5 13H17.500M5 17H17.500M5 21H17.500" stroke="#777" strokeWidth="1.400" />
      <circle cx="24" cy="13" r="1.800" fill="#2b2b2b" />
      <circle cx="24" cy="20.500" r="1.800" fill="#2b2b2b" />
    </Svg>
  ),
  output: (
    <Svg>
      <path d="M2 0H26C27.500 0 28 1 28 2V13C28 14.500 27 15.500 25.500 15.500H24V8H4V15.500H2.500C1 15.500 0 14.500 0 13V2C0 1 .5 0 2 0Z" fill="#c4c4c4" />
      <rect x="6" y="9.500" width="16.500" height="18.500" fill="#a3a3a3" />
      <path d="M8 25.500L13 17.500L18 25.500Z" fill="#2b2b2b" />
      <circle cx="18.500" cy="14.500" r="1.800" fill="#2b2b2b" />
    </Svg>
  ),
  viewlayer: <ViewLayerIcon c="#e8e8e8" />,
  scene: <SceneIcon c="#c4c4c4" />,
  world: (
    <Svg>
      <circle cx="14" cy="14" r="12.500" stroke={R} strokeWidth="2.200" />
      <path d="M28 0L23 5M5 23L0 28" stroke={R} strokeWidth="2.200" />
      <path d="M4 8C7 3 12 2 15 3L17 7L13 9L14 12L10 11L9 15L6 14L3 12ZM12 16L19 15.500L20 20L17 26L13 25L14 20.500Z" fill={R} />
    </Svg>
  ),
  object: (
    <Svg>
      <path d="M1 8V1H8M20 1H27V8M27 20V27H20M8 27H1V20" stroke="#9b6a40" strokeWidth="2" />
      <rect x="6" y="6.500" width="16" height="16" fill="#cb8951" />
    </Svg>
  ),
  modifier: (
    <Svg>
      <path d="M18 0L13.500 5C12.500 8 13 10 13.500 11.500L1 23C-1 26 2 29.500 5 27.500L14.500 15.500C20 17.500 27.500 15 28 8L22 12.500L17 9L16 5.500L20.500 .5Z" fill={B} />
    </Svg>
  ),
  particles: (
    <Svg>
      <path d="M5 5V24M5 5H24M7 7L24 24" stroke={B2} strokeWidth="2" />
      <circle cx="5" cy="5" r="5.500" fill={B} stroke="#2b2b2b" />
      <circle cx="25" cy="5" r="3" fill={B2} />
      <circle cx="5" cy="25" r="3" fill={B2} />
      <circle cx="24" cy="24" r="4" fill={B2} />
    </Svg>
  ),
  physics: (
    <Svg>
      <path d="M17 1.800A12.500 12.500 0 1 0 25.500 20" stroke={B2} strokeWidth="2.200" />
      <circle cx="14" cy="14" r="6" fill={B} />
      <circle cx="24" cy="4" r="4" fill={B2} />
    </Svg>
  ),
  constraint: (
    <Svg>
      <path d="M18 2.500C21 -.5 27.500 1 27 7L20.500 21.500C17 29 3 28.500 1.300 18.500C1 14 3.500 11 5.500 9.500Z" stroke={B} strokeWidth="2.200" />
      <circle cx="11" cy="17" r="5" stroke={B} strokeWidth="3.600" />
      <circle cx="22" cy="6" r="2" fill={B} />
    </Svg>
  ),
  data: <MeshDataIcon />,
  material: (
    <Svg>
      <circle cx="14" cy="14" r="12.800" stroke={R} strokeWidth="2.200" />
      <path d="M14 1V17.500C9 17.500 4 16.500 1.200 13.500C1.500 6 7 1 14 1ZM14 17.500C19 17.500 24 16 26.800 13.500C26.500 21 21 27 14 27Z" fill={R} />
    </Svg>
  ),
  texture: (
    <Svg>
      <rect x="1" y="1" width="26" height="26" stroke="#a3535b" strokeWidth="2.200" />
      <path d="M2 2H8V8H2ZM14 2H20V8H14ZM8 8H14V14H8ZM20 8H26V14H20ZM2 14H8V20H2ZM14 14H20V20H14ZM8 20H14V26H8ZM20 20H26V26H20Z" fill={R} />
    </Svg>
  ),
};

const PropTabs = () => (
  <div className="flex w-[56px] shrink-0 flex-col items-end bg-[#232323] pt-[18px]">
    {Object.keys(propIcons).map((k) => (
      <div
        key={k}
        className={`mb-[4px] flex h-[52px] w-[52px] shrink-0 items-center justify-center rounded-l-[8px] shadow-[0_2px_0_#1e1e1e] ${
          k === "viewlayer" ? "bg-[#424242]" : "bg-[#2b2b2b]"
        } ${k === "render" || k === "texture" ? "mt-[16px]" : ""} ${k === "object" ? "mt-[16px]" : ""}`}
      >
        {propIcons[k]}
      </div>
    ))}
  </div>
);

const PanelHead = ({ title, className }) => (
  <div className={`flex items-center pl-[18px] pr-[14px] text-[23px] text-[#dadada] ${className}`}>
    <TriDown c="#a2a2a2" />
    <span className="ml-[14px] flex-1 pt-[2px]">{title}</span>
    <Grip />
  </div>
);

const SubHead = ({ title, className }) => (
  <div className={`flex items-center bg-[#383838] pl-[46px] text-[#d4d4d4] ${className}`}>
    <TriDown c="#a2a2a2" />
    <span className="ml-[14px] pt-[1px]">{title}</span>
  </div>
);

const PropRow = ({ label, name, on, className = "h-[40px]", first = "w-[265px]" }) => (
  <div className={`flex items-center ${className} ${on ? "text-white" : ""}`}>
    <div className={`shrink-0 pr-[17px] text-right ${first}`}>{label}</div>
    <Check on={on} />
    <span className="ml-[7px]">{name}</span>
  </div>
);

const Properties = () => (
  <div className="mt-[7px] flex min-h-0 flex-1 flex-col overflow-hidden rounded-t-[12px] rounded-br-[12px] bg-[#232323]">
    <div className="flex h-[50px] shrink-0 items-center bg-[#383838] pb-[2px]">
      <HeaderBtn className="ml-[16px] w-[63px] gap-[5px] pl-[7px]">
        <Svg>
          <rect x="0" y="0" width="28" height="12" rx="5" fill="#dedede" />
          <rect x="15" y="2.500" width="10.500" height="7" rx="2" fill="#2b2b2b" />
          <rect x="0" y="16" width="28" height="12" rx="5" fill="#dedede" />
          <rect x="18.500" y="18.500" width="7" height="7" rx="2" fill="#2b2b2b" />
        </Svg>
        <Chevron />
      </HeaderBtn>
      <HeaderBtn className="ml-[161px] w-[232px] !bg-[#1d1d1d] pl-[8px]">
        <SearchIcon />
      </HeaderBtn>
    </div>
    <div className="flex min-h-0 flex-1">
      <PropTabs />
      <div className="flex-1 bg-[#424242] text-[#e2e2e2]">
        <div className="flex h-[73px] items-center pl-[22px] pr-[19px]">
          <SceneIcon />
          <span className="ml-[16px] w-[95px]">Scene</span>
          <Svg w={8} h={12}>
            <path d="M0 0L8 6L0 12Z" fill="#2e2e2e" />
          </Svg>
          <div className="ml-[26px]">
            <ViewLayerIcon />
          </div>
          <span className="ml-[18px] flex-1">View Layer</span>
          <Svg>
            <path d="M18 1.500L26.500 10L23.500 10.500L19 15.500L18.500 21.500L13 22L6 14.500L8 11L14 9.500L17.500 4.500ZM8.500 19L1 27.500" stroke="#9a9a9a" strokeWidth="1.700" />
          </Svg>
        </div>
        <PanelHead title="View Layer" className="h-[46px]" />
        <div className="relative h-[116px] bg-[#383838] pt-[13.500px]">
          <PropRow on name="Use for Rendering" className="h-[44px]" first="w-[249px]" />
          <PropRow name="Render Single Layer" className="h-[44px]" first="w-[249px]" />
          <div className="absolute right-[29px] top-[32px] size-[8px] rounded-full bg-[#d4d4d4]" />
        </div>
        <PanelHead title="Passes" className="h-[49px] pt-[1px]" />
        <SubHead title="Data" className="h-[48px]" />
        <div className="h-[204px] bg-[#2f2f2f] pt-[14px]">
          <PropRow on name="Combined" className="h-[44px]" />
          <PropRow on name="Z" className="h-[44px]" />
          <PropRow name="Mist" className="h-[44px]" />
          <PropRow name="Normal" className="h-[44px]" />
        </div>
        <SubHead title="Light" className="h-[48px]" />
        <div className="h-[462px] bg-[#2f2f2f] pt-[16px]">
          <PropRow label="Diffuse" name="Light" />
          <PropRow name="Color" />
          <div className="h-[10px]" />
          <PropRow label="Specular" name="Light" />
          <PropRow name="Color" />
          <div className="h-[10px]" />
          <PropRow label="Volume" name="Transmittance" />
          <PropRow name="Scatter" />
          <div className="h-[10px]" />
          <PropRow label="Other" name="Emission" />
          <PropRow name="Environment" />
          <PropRow name="Shadow" />
          <PropRow name="Ambient Occlusion" />
        </div>
        <SubHead title="Effects" className="h-[48px]" />
        <div className="h-[72px] bg-[#2f2f2f] pt-[16px]">
          <PropRow name="Bloom" />
        </div>
      </div>
    </div>
  </div>
);

/* ---------- status bar ---------- */

const Mouse = ({ button, drag }) => (
  <Svg w={drag ? 36 : 24} h={30}>
    <path
      d={
        button === "left"
          ? "M13 1.200H15C20 1.200 22.500 4 22.500 8V22C22.500 26 20 28.800 15 28.800H9C4 28.800 1.500 26 1.500 22V16.500"
          : button === "right"
          ? "M11 1.200H9C4 1.200 1.500 4 1.500 8V22C1.500 26 4 28.800 9 28.800H15C20 28.800 22.500 26 22.500 22V16.500"
          : "M9 1.200H15C20 1.200 22.500 4 22.500 8V22C22.500 26 20 28.800 15 28.800H9C4 28.800 1.500 26 1.500 22V8C1.500 4 4 1.200 9 1.200Z"
      }
      stroke="#a8a8a8"
      strokeWidth="2"
    />
    {button === "left" && <path d="M11 0V14.500H0V8C0 3 3 0 8 0Z" fill="#a8a8a8" />}
    {button === "right" && <path d="M13 0V14.500H24V8C24 3 21 0 16 0Z" fill="#a8a8a8" />}
    {button === "middle" && <rect x="8.500" y="4.500" width="7" height="11" rx="2.500" fill="#a8a8a8" />}
    {drag && <path d="M25.500 0C27.500 5 28 10 27.500 16M32 3V13" stroke="#a8a8a8" strokeWidth="1.600" />}
  </Svg>
);

const StatusBar = () => (
  <div className="flex h-[34px] shrink-0 items-center bg-[#303030] pb-[2px] pr-[29px] text-[#a8a8a8]">
    <div className="ml-[21px] w-[45px] pt-[2px]">
      <Mouse button="left" />
    </div>
    <span className="w-[87px]">Select</span>
    <div className="w-[48px] pt-[2px]">
      <Mouse button="left" drag />
    </div>
    <span className="w-[359px]">Box Select</span>
    <div className="w-[45px] pt-[2px]">
      <Mouse button="middle" />
    </div>
    <span className="w-[490px]">Dolly View</span>
    <div className="w-[49px] pt-[2px]">
      <Mouse button="right" drag />
    </div>
    <span className="flex-1">Lasso Select</span>
    <span>2.91.0</span>
  </div>
);

export default function App() {
  return (
    <div className="h-[2240px] w-[4096px] overflow-hidden bg-white">
      <div className="h-[2363px] w-[4320px] pl-[111px] pt-[75px] font-['DejaVu_Sans',sans-serif] text-[21px] [zoom:0.948148]">
        <div className="h-[2140px] w-[4098px] overflow-hidden rounded-[22px] border border-black bg-[#565656] shadow-[0_44px_80px_rgba(0,0,0,.65)]">
          <div className="flex h-full flex-col border-[2.2px] border-[#565656] border-t-[#77747a] [text-shadow:0_2px_2px_rgba(0,0,0,.35)]">
            <TitleBar />
            <div className="h-px shrink-0 bg-black" />
            <MenuBar />
            <div className="flex min-h-0 flex-1 gap-[7px] bg-[#1f1f1f] pb-[6px] pt-[7px]">
              <div className="flex w-[3381px] shrink-0 flex-col overflow-hidden rounded-[12px]">
                <ToolHeader />
                <Viewport />
              </div>
              <div className="flex w-[703px] shrink-0 flex-col">
                <Outliner />
                <Properties />
              </div>
            </div>
            <StatusBar />
          </div>
        </div>
      </div>
    </div>
  );
}
